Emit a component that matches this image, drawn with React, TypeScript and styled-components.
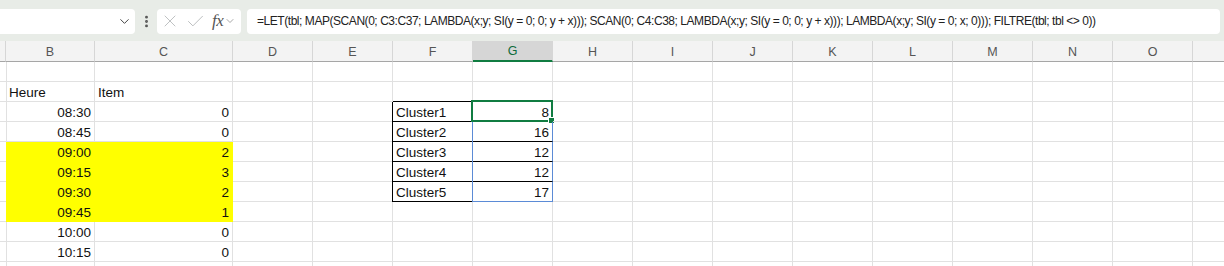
import React from 'react';
import styled, { createGlobalStyle } from 'styled-components';
import { ChevronDown, EllipsisVertical, X, Check } from 'lucide-react';

const GlobalStyle = createGlobalStyle`
	html, body {
		margin: 0;
		padding: 0;
		background: #ffffff;
		overflow: hidden;
	}
	body {
		font-family: "Liberation Sans", Arial, sans-serif;
	}
`;

const GRID_LINE = '#e1e1e1';
const YELLOW = '#ffff00';
const SPILL = '#5b8bd6';
const ACTIVE = '#107c41';

const COLUMNS = ['', 'B', 'C', 'D', 'E', 'F', 'G', 'H', 'I', 'J', 'K', 'L', 'M', 'N', 'O', ''];
const COLUMN_WIDTHS = '6px 89px 138px repeat(12, 80px) 80px';

const FORMULA =
	'=LET(tbl; MAP(SCAN(0; C3:C37; LAMBDA(x;y; SI(y = 0; 0; y + x))); SCAN(0; C4:C38; LAMBDA(x;y; SI(y = 0; 0; y + x))); LAMBDA(x;y; SI(y = 0; x; 0))); FILTRE(tbl; tbl <> 0))';

type CellData = {
	text?: string;
	align?: 'left' | 'right';
	fill?: string;
	ruled?: boolean;
	edgeLeft?: boolean;
	edgeTop?: boolean;
	spill?: 'top' | 'mid' | 'end';
	active?: boolean;
};

const Shell = styled.div`
	width: 1224px;
	height: 266px;
	overflow: hidden;
	display: flex;
	flex-direction: column;
`;

const FormulaBar = styled.div`
	height: 41px;
	flex: none;
	display: flex;
	align-items: center;
	background: #e8ece7;
	box-sizing: border-box;
	padding: 1px 4px 0 0;
`;

const NameBox = styled.div`
	width: 143px;
	height: 25px;
	margin-left: -8px;
	background: #ffffff;
	border-radius: 4px;
	display: flex;
	align-items: center;
	justify-content: flex-end;
	padding-right: 3px;
	box-sizing: border-box;
	color: #444;
`;

const Grip = styled.div`
	width: 22px;
	display: flex;
	justify-content: center;
	color: #555;
`;

const IconBox = styled.div`
	width: 84px;
	height: 25px;
	background: #ffffff;
	border-radius: 4px;
	display: flex;
	align-items: center;
	box-sizing: border-box;
	padding-left: 3px;
	gap: 5px;
	color: #b9bcbd;
`;

const Fx = styled.span`
	font-family: "Liberation Serif", "Times New Roman", serif;
	font-style: italic;
	font-size: 17px;
	color: #555;
	margin-left: 1px;
	letter-spacing: -0.5px;
`;

const FxChevron = styled.span`
	display: flex;
	margin-left: -4px;
	color: #8a8a8a;
`;

const FormulaInput = styled.div`
	flex: 1;
	height: 25px;
	margin-left: 6px;
	background: #ffffff;
	border-radius: 4px;
	display: flex;
	align-items: center;
	padding-left: 10px;
	box-sizing: border-box;
	font-size: 12px;
	letter-spacing: -0.45px;
	color: #222;
	white-space: nowrap;
	overflow: hidden;
`;

const Sheet = styled.div`
	display: grid;
	grid-template-columns: ${COLUMN_WIDTHS};
	grid-template-rows: 21px;
	grid-auto-rows: 20px;
`;

const HeaderCell = styled.div<{ $current?: boolean }>`
	box-sizing: border-box;
	display: flex;
	align-items: center;
	justify-content: center;
	font-size: 12.5px;
	padding-top: 1px;
	color: ${(p) => (p.$current ? '#0e6b3b' : '#555')};
	background: ${(p) => (p.$current ? '#d6d6d6' : '#f3f3f3')};
	border-right: 1px solid #d6d6d6;
	border-bottom: ${(p) => (p.$current ? `2px solid ${ACTIVE}` : '1px solid #a6a6a6')};
`;

const Cell = styled.div<{
	$align?: 'left' | 'right';
	$fill?: string;
	$ruled?: boolean;
	$edgeLeft?: boolean;
	$edgeTop?: boolean;
	$spill?: 'top' | 'mid' | 'end';
}>`
	position: relative;
	box-sizing: border-box;
	display: flex;
	align-items: center;
	justify-content: ${(p) => (p.$align === 'right' ? 'flex-end' : 'flex-start')};
	padding: 1px 3px 0 3px;
	font-size: 13.5px;
	color: #111;
	white-space: nowrap;
	background: ${(p) => p.$fill ?? 'transparent'};
	border-right: 1px solid ${(p) => (p.$spill ? SPILL : p.$ruled ? '#000' : p.$fill ?? GRID_LINE)};
	border-bottom: 1px solid ${(p) => (p.$spill === 'end' ? SPILL : p.$ruled ? '#000' : p.$fill ?? GRID_LINE)};
	box-shadow: ${(p) => {
		const shadows: string[] = [];
		if (p.$edgeLeft) shadows.push('-1px 0 0 #000');
		if (p.$spill) shadows.push(`-1px 0 0 ${SPILL}`);
		if (p.$edgeTop) shadows.push('0 -1px 0 #000');
		return shadows.length ? shadows.join(', ') : 'none';
	}};
`;

const ActiveFrame = styled.div`
	position: absolute;
	top: -2px;
	left: -2px;
	right: -1px;
	bottom: -1px;
	border: 2px solid ${ACTIVE};
	pointer-events: none;
`;

const FillHandle = styled.div`
	position: absolute;
	right: -4px;
	bottom: -4px;
	width: 5px;
	height: 5px;
	background: ${ACTIVE};
	border: 1px solid #ffffff;
`;

const times = ['08:30', '08:45', '09:00', '09:15', '09:30', '09:45', '10:00', '10:15'];
const items = ['0', '0', '2', '3', '2', '1', '0', '0'];
const clusters: [string, string][] = [
	['Cluster1', '8'],
	['Cluster2', '16'],
	['Cluster3', '12'],
	['Cluster4', '12'],
	['Cluster5', '17'],
];

function buildRows(): CellData[][] {
	const rows: CellData[][] = [];
	for (let r = 1; r <= 11; r++) {
		const row: CellData[] = COLUMNS.map(() => ({}));
		if (r === 2) {
			row[1] = { text: 'Heure' };
			row[2] = { text: 'Item' };
		}
		const t = r - 3;
		if (t >= 0 && t < times.length) {
			const fill = t >= 2 && t <= 5 ? YELLOW : undefined;
			row[1] = { text: times[t], align: 'right', fill };
			row[2] = { text: items[t], align: 'right', fill };
		}
		if (t >= 0 && t < clusters.length) {
			const last = t === clusters.length - 1;
			row[5] = { text: clusters[t][0], ruled: true, edgeLeft: true, edgeTop: t === 0 };
			row[6] = {
				text: clusters[t][1],
				align: 'right',
				ruled: true,
				edgeTop: t === 0,
				spill: last ? 'end' : t === 0 ? 'top' : 'mid',
				active: t === 0,
			};
		}
		rows.push(row);
	}
	return rows;
}

export default function App() {
	const rows = buildRows();
	return (
		<Shell>
			<GlobalStyle />
			<FormulaBar>
				<NameBox>
					<ChevronDown size={15} strokeWidth={1.6} />
				</NameBox>
				<Grip>
					<EllipsisVertical size={15} strokeWidth={2.6} />
				</Grip>
				<IconBox>
					<X size={20} strokeWidth={1.1} />
					<Check size={21} strokeWidth={1.1} />
					<Fx>fx</Fx>
					<FxChevron>
						<ChevronDown size={12} strokeWidth={1.5} />
					</FxChevron>
				</IconBox>
				<FormulaInput>{FORMULA}</FormulaInput>
			</FormulaBar>
			<Sheet>
				{COLUMNS.map((c, i) => (
					<HeaderCell key={`h${i}`} $current={c === 'G'}>
						{c}
					</HeaderCell>
				))}
				{rows.map((row, r) =>
					row.map((cell, c) => (
						<Cell
							key={`${r}-${c}`}
							$align={cell.align}
							$fill={cell.fill}
							$ruled={cell.ruled}
							$edgeLeft={cell.edgeLeft}
							$edgeTop={cell.edgeTop}
							$spill={cell.spill}
						>
							{cell.text}
							{cell.active && (
								<ActiveFrame>
									<FillHandle />
								</ActiveFrame>
							)}
						</Cell>
					))
				)}
			</Sheet>
		</Shell>
	);
}
